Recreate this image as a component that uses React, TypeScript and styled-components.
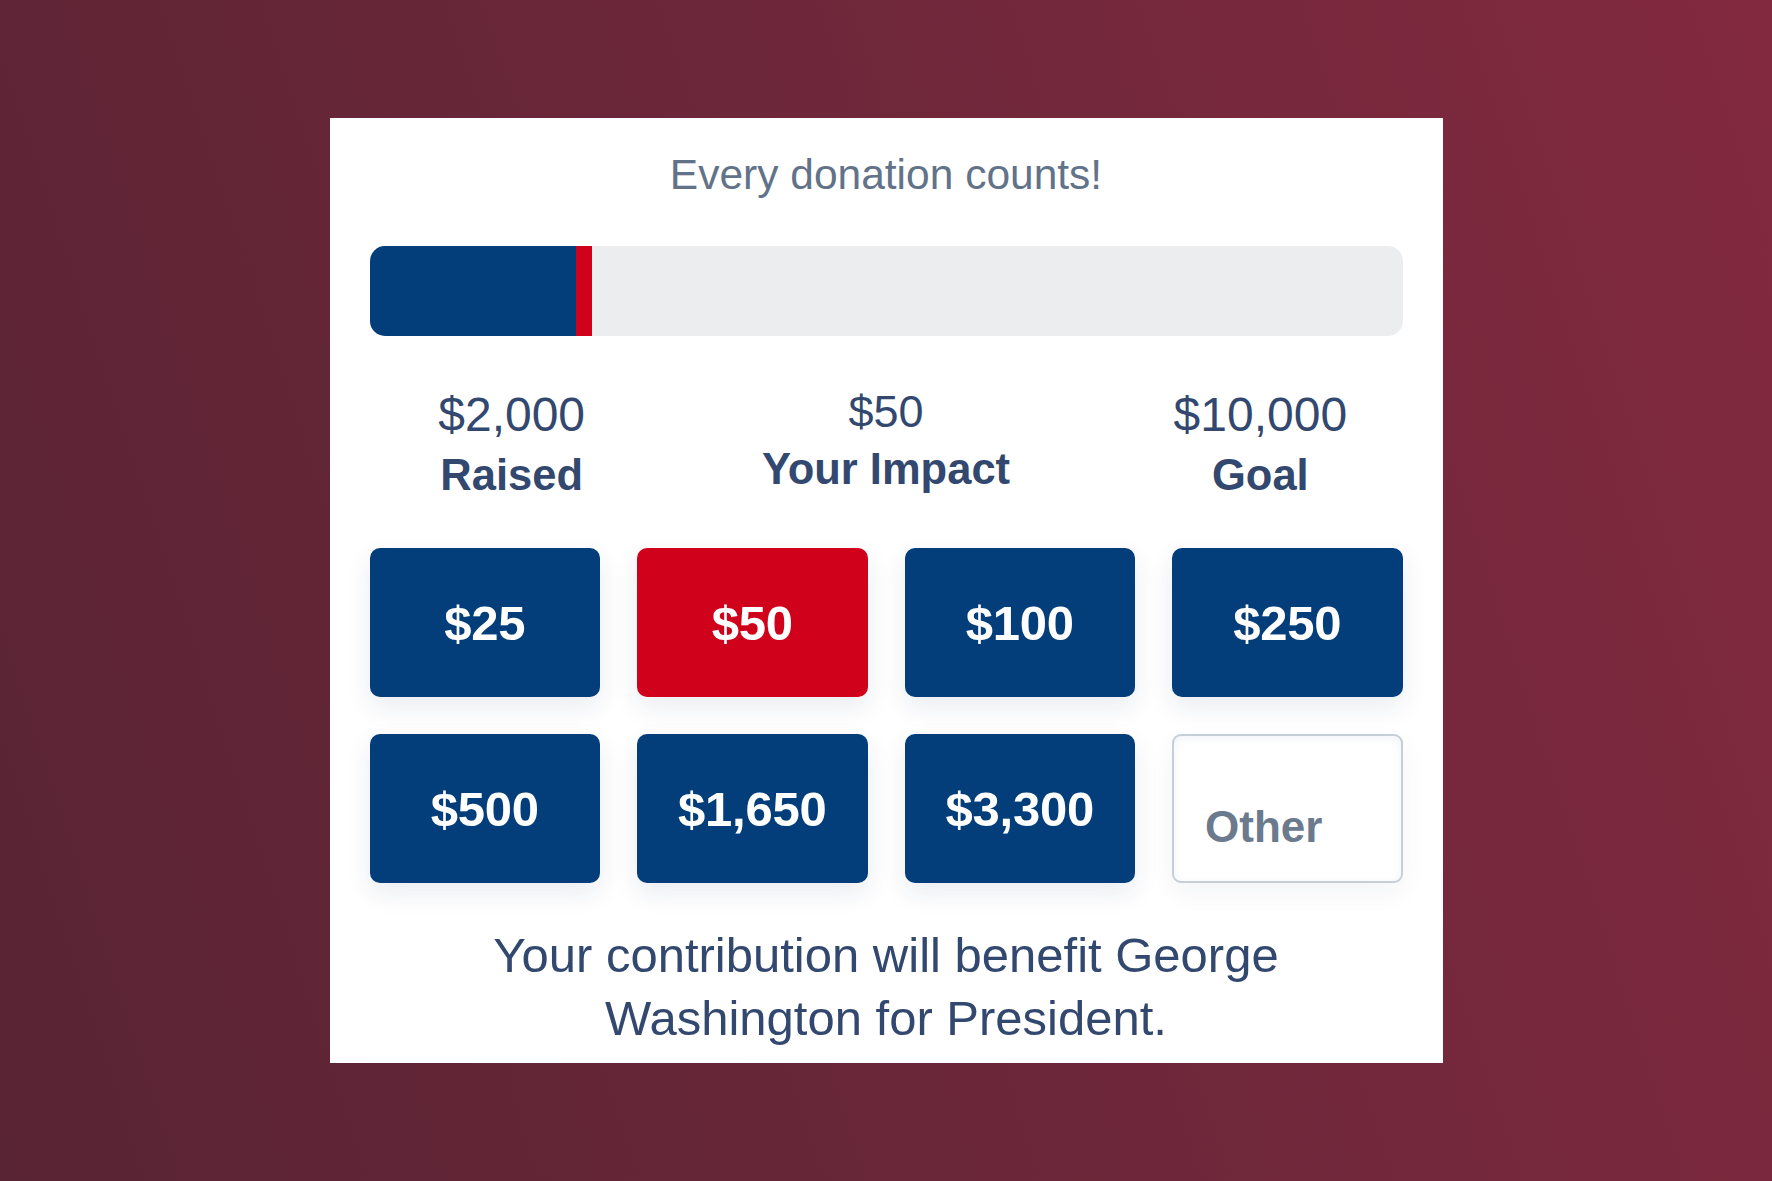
import React from "react";
import styled, { createGlobalStyle } from "styled-components";

const GlobalStyle = createGlobalStyle`
  html, body {
    margin: 0;
    padding: 0;
  }
  body {
    font-family: "Liberation Sans", Arial, Helvetica, sans-serif;
    background: linear-gradient(72deg, #592434 0%, #6a2739 45%, #82293f 100%);
    min-height: 100vh;
  }
  * { box-sizing: border-box; }
`;

const Page = styled.div`
  min-height: 100vh;
  display: flex;
  justify-content: center;
  align-items: flex-start;
  padding-top: 118px;
`;

const Card = styled.section`
  width: 1113px;
  background: #ffffff;
  padding: 32px 40px 13px;
  display: flex;
  flex-direction: column;
`;

const Title = styled.h2`
  margin: 0;
  font-size: 42.5px;
  line-height: 50px;
  font-weight: 400;
  color: #627389;
  text-align: center;
`;

const Track = styled.div`
  margin-top: 46px;
  height: 90px;
  background: #ecedef;
  border-radius: 15px;
  overflow: hidden;
  display: flex;
`;

const Segment = styled.div<{ $tone: "raised" | "impact" }>`
  height: 100%;
  flex: none;
  background: ${(p) => (p.$tone === "raised" ? "#033d7a" : "#d0021b")};
`;

const Stats = styled.div`
  margin: 50px -45px 0;
  display: grid;
  grid-template-columns: repeat(3, 1fr);
`;

const Stat = styled.div`
  display: flex;
  flex-direction: column;
  align-items: center;
  gap: 6px;
  color: #33486f;
`;

const StatValue = styled.div<{ $small?: boolean }>`
  font-size: ${(p) => (p.$small ? "45px" : "48px")};
  line-height: ${(p) => (p.$small ? "52px" : "58px")};
  font-weight: 400;
`;

const StatLabel = styled.div`
  font-size: 43.5px;
  line-height: 50px;
  font-weight: 700;
`;

const Amounts = styled.div`
  margin-top: 48px;
  display: grid;
  grid-template-columns: repeat(4, 1fr);
  grid-auto-rows: 149px;
  gap: 37px;
`;

const AmountButton = styled.button<{ $active?: boolean }>`
  border: none;
  border-radius: 10px;
  background: ${(p) => (p.$active ? "#d0021b" : "#033d7a")};
  color: #ffffff;
  font-family: "Liberation Sans", Arial, Helvetica, sans-serif;
  font-size: 49px;
  font-weight: 700;
  letter-spacing: -0.2px;
  box-shadow: 0 10px 26px rgba(25, 45, 100, 0.09);
  cursor: pointer;
  padding: 0;
`;

const OtherInput = styled.input`
  width: 100%;
  height: 100%;
  border: 2px solid #c8ced6;
  border-radius: 9px;
  background: #ffffff;
  padding: 36px 12px 0 31px;
  font-family: "Liberation Sans", Arial, Helvetica, sans-serif;
  font-size: 44px;
  font-weight: 700;
  color: #33486f;
  box-shadow: inset 0 2px 8px rgba(60, 90, 160, 0.08),
    0 10px 26px rgba(25, 45, 100, 0.05);
  outline: none;
  &::placeholder {
    color: #6b7a8d;
    opacity: 1;
  }
`;

const Footnote = styled.p`
  margin: 41px 0 0;
  padding: 0 30px;
  font-size: 49px;
  line-height: 63px;
  font-weight: 400;
  color: #33486f;
  text-align: center;
`;

const raised = 2000;
const goal = 10000;
const impact = 50;
const amounts = [25, 50, 100, 250, 500, 1650, 3300];

const fmt = (n: number) => "$" + n.toLocaleString("en-US");

export default function App() {
  const raisedPct = (raised / goal) * 100;
  return (
    <>
      <GlobalStyle />
      <Page>
        <Card>
          <Title>Every donation counts!</Title>
          <Track>
            <Segment $tone="raised" style={{ width: `${raisedPct}%` }} />
            <Segment $tone="impact" style={{ width: "16px" }} />
          </Track>
          <Stats>
            <Stat>
              <StatValue>{fmt(raised)}</StatValue>
              <StatLabel>Raised</StatLabel>
            </Stat>
            <Stat>
              <StatValue $small>{fmt(impact)}</StatValue>
              <StatLabel>Your Impact</StatLabel>
            </Stat>
            <Stat>
              <StatValue>{fmt(goal)}</StatValue>
              <StatLabel>Goal</StatLabel>
            </Stat>
          </Stats>
          <Amounts>
            {amounts.map((a) => (
              <AmountButton key={a} $active={a === impact}>
                {fmt(a)}
              </AmountButton>
            ))}
            <OtherInput placeholder="Other" />
          </Amounts>
          <Footnote>
            Your contribution will benefit George Washington for President.
          </Footnote>
        </Card>
      </Page>
    </>
  );
}
